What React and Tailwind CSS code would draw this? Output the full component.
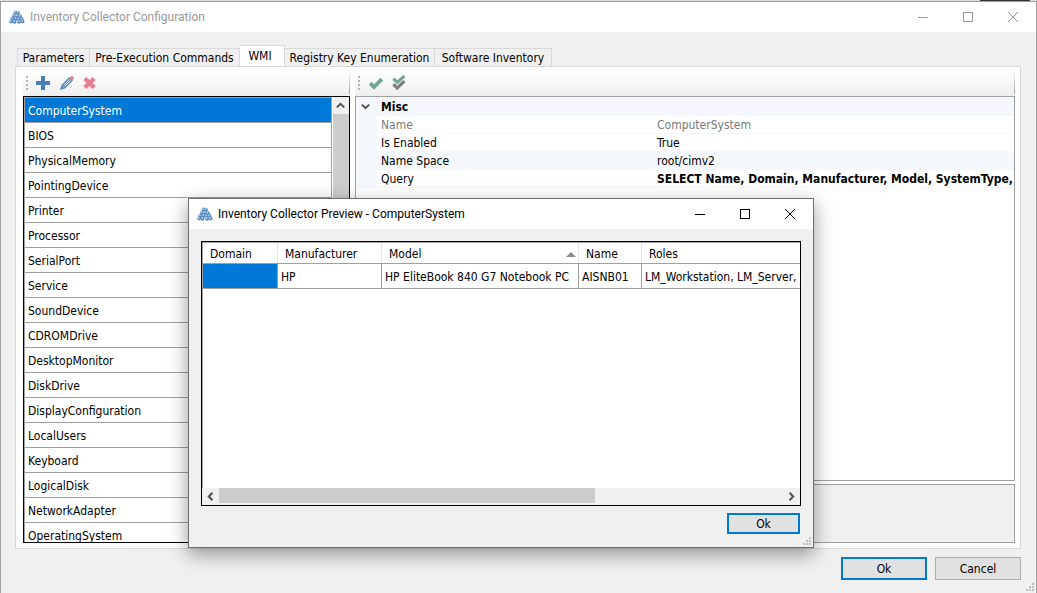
import { useState } from 'react'

const TABS = [
  { name: 'Parameters', width: 'w-[73px]' },
  { name: 'Pre-Execution Commands', width: 'w-[150px]' },
  { name: 'WMI', width: 'w-[45px]' },
  { name: 'Registry Key Enumeration', width: 'w-[150px]' },
  { name: 'Software Inventory', width: 'w-[117px]' },
]

const CLASSES = [
  'ComputerSystem',
  'BIOS',
  'PhysicalMemory',
  'PointingDevice',
  'Printer',
  'Processor',
  'SerialPort',
  'Service',
  'SoundDevice',
  'CDROMDrive',
  'DesktopMonitor',
  'DiskDrive',
  'DisplayConfiguration',
  'LocalUsers',
  'Keyboard',
  'LogicalDisk',
  'NetworkAdapter',
  'OperatingSystem',
]

const PROPERTIES = [
  { name: 'Name', value: 'ComputerSystem', text: 'text-[#7a7a7a]', bg: 'bg-white' },
  { name: 'Is Enabled', value: 'True', text: 'text-black', bg: 'bg-white' },
  { name: 'Name Space', value: 'root/cimv2', text: 'text-black', bg: 'bg-[#f4f7fc]' },
  { name: 'Query', value: 'SELECT Name, Domain, Manufacturer, Model, SystemType,', text: 'text-black', bg: 'bg-white', bold: true },
]

const BALLS = [
  [6.4, 3.4], [9, 3.8],
  [4.8, 7], [8, 6.8], [11, 7.2],
  [3.2, 9.8], [6.6, 9.8], [9.8, 10], [12.6, 10],
  [2.2, 12.4], [5.6, 12.8], [10, 12.8], [13.6, 12.4],
]

function Logo() {
  return (
    <svg width="16" height="16" viewBox="0 0 16 16" className="shrink-0">
      {BALLS.map(([x, y]) => (
        <g key={`${x}-${y}`}>
          <circle cx={x} cy={y} r="1.9" fill="#4f83ba" />
          <circle cx={x - 0.4} cy={y - 0.5} r="1" fill="#b4d0ec" />
        </g>
      ))}
    </svg>
  )
}

function WindowButtons({ color }) {
  return (
    <div className={`flex h-full ${color}`}>
      <button aria-label="Minimize" className="flex h-full w-[45px] items-center justify-center">
        <svg width="10" height="10" stroke="currentColor" shapeRendering="crispEdges"><path d="M0 5.5H10" /></svg>
      </button>
      <button aria-label="Maximize" className="flex h-full w-[45px] items-center justify-center">
        <svg width="10" height="10" fill="none" stroke="currentColor" shapeRendering="crispEdges"><path d="M.5 .5H9.5V9.5H.5Z" /></svg>
      </button>
      <button aria-label="Close" className="flex h-full w-[46px] items-center justify-center">
        <svg width="10" height="10" stroke="currentColor"><path d="M0 0L10 10M10 0L0 10" /></svg>
      </button>
    </div>
  )
}

function TitleBar({ title, text, buttons }) {
  return (
    <header className="flex h-[30px] shrink-0 items-center bg-white pl-2">
      <Logo />
      <h1 className={`ml-[5px] flex-1 truncate text-[12px] leading-4 ${text}`} style={{ fontFamily: "'Segoe UI', Roboto, sans-serif" }}>{title}</h1>
      <WindowButtons color={buttons} />
    </header>
  )
}

function Gripper() {
  return (
    <svg width="2" height="14" fill="#b4b4b4" className="mr-1 ml-[3px] shrink-0" shapeRendering="crispEdges">
      <path d="M0 0h2v2h-2zM0 4h2v2h-2zM0 8h2v2h-2zM0 12h2v2h-2z" />
    </svg>
  )
}

function SizeGrip() {
  return (
    <svg width="8" height="8" fill="#bdbdbd" className="absolute right-[2px] bottom-[2px]" shapeRendering="crispEdges">
      <path d="M6 0h2v2h-2zM3 3h2v2h-2zM6 3h2v2h-2zM0 6h2v2h-2zM3 6h2v2h-2zM6 6h2v2h-2z" />
    </svg>
  )
}

function Chevron({ rotate }) {
  return (
    <svg width="9" height="9" viewBox="0 0 9 9" fill="none" stroke="#505050" strokeWidth="2" className={rotate}>
      <path d="M.8 2.6L4.5 6.2L8.2 2.6" />
    </svg>
  )
}

function ToolBar({ children }) {
  return (
    <div className="flex h-[25px] shrink-0 bg-linear-to-b from-[#fefefe] to-[#efefef]">
      <div className="flex flex-1 items-center pb-[2px]">
        <Gripper />
        {children}
      </div>
      <div className="my-[2px] w-px bg-linear-to-b from-[#f4f4f4] to-[#a0a0a0]" />
    </div>
  )
}

function ToolButton({ label, children }) {
  return (
    <button aria-label={label} className="flex h-6 w-[23px] items-center justify-center">
      <svg width="16" height="16" viewBox="0 0 16 16">{children}</svg>
    </button>
  )
}

function ClassList() {
  const [selected, setSelected] = useState('ComputerSystem')
  return (
    <section className="flex w-[327px] shrink-0 flex-col">
      <ToolBar>
        <ToolButton label="Add">
          <path fill="#4a80b8" d="M5 1h4v5h5v4h-5v5h-4v-5h-5v-4h5z" />
        </ToolButton>
        <ToolButton label="Edit">
          <path fill="#4a80b8" d="M1 15L2.4 10.5L5.5 13.6Z" />
          <path d="M3.2 10.2L10.4 3L13 5.6L5.8 12.8Z" fill="#e4eef8" stroke="#4a80b8" strokeWidth="1.3" />
          <path d="M4.5 11.5L11.7 4.3" stroke="#4a80b8" />
          <path d="M10.4 2.8L12.1 1.1Q13.2 .5 14.4 1.7T14.9 3.9L13.2 5.6Z" fill="#e8899b" />
        </ToolButton>
        <ToolButton label="Delete">
          <path d="M2.8 3.5L12.2 12.5M12.2 3.5L2.8 12.5" stroke="#e67d91" strokeWidth="4.4" />
        </ToolButton>
      </ToolBar>
      <div className="flex min-h-0 flex-1 border border-black">
        <ul className="min-h-0 flex-1 overflow-hidden border-t border-l border-[#a0a0a0]">
          {CLASSES.map((name) => (
            <li key={name} className="h-[25px] border-r border-b border-[#a0a0a0]">
              <button
                onClick={() => setSelected(name)}
                className={`block h-6 w-full px-[3px] pt-px text-left leading-6 ${name === selected ? 'bg-[#0078d7] text-white' : 'bg-white text-black'}`}
              >
                {name}
              </button>
            </li>
          ))}
        </ul>
        <div className="ml-px flex w-4 flex-col bg-[#f0f0f0]">
          <button aria-label="Scroll up" className="flex h-[17px] items-center justify-center pr-px"><Chevron rotate="rotate-180" /></button>
          <div className="h-3/5 bg-[#cdcdcd]" />
        </div>
      </div>
    </section>
  )
}

function PropertyPane() {
  return (
    <section className="flex min-w-0 flex-1 flex-col">
      <ToolBar>
        <ToolButton label="Preview">
          <path d="M2.2 8.2L6 12L13.8 4.2" fill="none" stroke="#72a594" strokeWidth="3.8" />
        </ToolButton>
        <ToolButton label="Preview all">
          <path d="M2.4 9.2L6.2 13L13.4 6.2" fill="none" stroke="#7c7c7c" strokeWidth="3.1" />
          <path d="M2.4 3.7L6.2 7.3L13.4 1" fill="none" stroke="#72a594" strokeWidth="3.1" />
        </ToolButton>
      </ToolBar>
      <div className="min-h-0 flex-1 overflow-hidden border border-[#a0a0a0] bg-white">
        <table className="w-full table-fixed border-separate border-spacing-0">
          <colgroup>
            <col className="w-[21px]" />
            <col className="w-[277px]" />
            <col />
          </colgroup>
          <thead>
            <tr className="h-[19px] bg-[#f4f7fc]">
              <th className="p-0"><button aria-label="Collapse" className="flex w-[18px] justify-center"><Chevron rotate="rotate-0" /></button></th>
              <th colSpan={2} className="p-0 pt-px pl-1 text-left leading-[18px] font-bold">Misc</th>
            </tr>
          </thead>
          <tbody>
            {PROPERTIES.map((p) => (
              <tr key={p.name} className={`h-[18px] leading-4 ${p.bg} ${p.text}`}>
                <td className="bg-[#f4f7fc] p-0" />
                <td className="border-b border-[#f4f7fc] p-0 pt-px pl-1">{p.name}</td>
                <td className={`border-b border-[#f4f7fc] p-0 pt-px pl-[3px] whitespace-nowrap ${p.bold ? 'font-bold' : ''}`}>{p.value}</td>
              </tr>
            ))}
          </tbody>
        </table>
      </div>
      <div className="mt-[3px] h-[59px] shrink-0 border border-[#a0a0a0] bg-[#f0f0f0]" />
    </section>
  )
}

function PreviewDialog() {
  return (
    <div role="dialog" aria-label="Preview" className="absolute top-[198px] left-[188px] flex h-[350px] w-[626px] flex-col border border-[#6e6e6e] bg-[#f0f0f0] shadow-[0_6px_18px_rgba(0,0,0,0.4)]">
      <TitleBar title="Inventory Collector Preview - ComputerSystem" text="text-black" buttons="text-black" />
      <div className="mx-3 mt-3 flex min-h-0 flex-1 flex-col overflow-hidden border border-black bg-white">
        <div className="min-h-0 flex-1 overflow-hidden border-t border-l border-[#a0a0a0]">
          <table className="w-[900px] table-fixed border-separate border-spacing-0 text-left whitespace-nowrap">
            <colgroup>
              <col className="w-[75px]" />
              <col className="w-[104px]" />
              <col className="w-[197px]" />
              <col className="w-[63px]" />
              <col />
            </colgroup>
            <thead>
              <tr className="h-[21px]">
                {['Domain', 'Manufacturer', 'Model', 'Name', 'Roles'].map((h) => (
                  <th key={h} scope="col" className="border-b border-[#a0a0a0] p-0 font-normal">
                    <div className="flex h-5 items-center justify-between border-r border-[#e5e5e5] pt-[2px] pr-[2px] pl-[7px] leading-4">
                      {h}
                      {h === 'Model' && (
                        <svg width="10" height="5" fill="#8c8c8c"><path d="M0 5L5 0L10 5Z" /></svg>
                      )}
                    </div>
                  </th>
                ))}
              </tr>
            </thead>
            <tbody>
              <tr className="h-[25px] leading-[22px]">
                <td className="border-r border-b border-[#a0a0a0] bg-[#0078d7] p-0" />
                {['HP', 'HP EliteBook 840 G7 Notebook PC', 'AISNB01', 'LM_Workstation, LM_Server,'].map((v) => (
                  <td key={v} className="border-r border-b border-[#a0a0a0] p-0 pt-[2px] pl-[3px]">{v}</td>
                ))}
              </tr>
            </tbody>
          </table>
        </div>
        <div className="flex h-[17px] shrink-0 bg-[#f0f0f0]">
          <button aria-label="Scroll left" className="flex w-[17px] items-center justify-center"><Chevron rotate="rotate-90" /></button>
          <div className="flex-1"><div className="h-[15px] w-2/3 bg-[#cdcdcd]" /></div>
          <button aria-label="Scroll right" className="flex w-[17px] items-center justify-center"><Chevron rotate="-rotate-90" /></button>
        </div>
      </div>
      <div className="flex h-[41px] shrink-0 items-start justify-end pt-[7px] pr-[13px]">
        <button className="h-[21px] w-[73px] border-2 border-[#0078d7] bg-[#e1e1e1] leading-4">Ok</button>
      </div>
      <SizeGrip />
    </div>
  )
}

export default function App() {
  const [tab, setTab] = useState('WMI')

  return (
    <div className="relative flex h-screen flex-col overflow-hidden bg-[#f0f0f0] text-[12px] text-black" style={{ fontFamily: "Tahoma, 'DejaVu Sans Condensed', sans-serif" }}>
      <div className="flex h-px shrink-0 justify-end bg-[#dcdcdc] pr-[7px]"><div className="w-[50px] bg-[#303030]" /></div>
      <div className="relative flex min-h-0 flex-1 flex-col border-x border-t border-[#a0a0a0]">
        <TitleBar title="Inventory Collector Configuration" text="text-[#999999]" buttons="text-[#999999]" />

        <main className="flex min-h-0 flex-1 flex-col pt-[13px] pr-[15px] pl-[14px]">
          <div role="tablist" className="flex h-[21px] shrink-0 items-end pl-[2px]">
            {TABS.map((t) => (
              <button
                key={t.name}
                role="tab"
                aria-selected={t.name === tab}
                onClick={() => setTab(t.name)}
                className={`shrink-0 border-t border-r border-[#d9d9d9] text-center whitespace-nowrap first:border-l ${t.width} ${t.name === tab ? 'h-[21px] bg-white pr-1' : 'h-[18px] bg-[#f0f0f0]'}`}
              >
                {t.name}
              </button>
            ))}
          </div>
          <div className="flex min-h-0 flex-1 gap-[5px] border border-[#d9d9d9] bg-white pt-1 pr-[5px] pb-[5px] pl-[7px]">
            <ClassList />
            <PropertyPane />
          </div>
          <footer className="flex h-11 shrink-0 items-start justify-end gap-2 pt-2">
            <button className="h-[23px] w-[86px] border-2 border-[#0078d7] bg-[#e1e1e1] leading-4">Ok</button>
            <button className="h-[23px] w-[86px] border border-[#adadad] bg-[#e1e1e1] leading-4">Cancel</button>
          </footer>
        </main>
        <SizeGrip />
      </div>

      <PreviewDialog />
    </div>
  )
}
